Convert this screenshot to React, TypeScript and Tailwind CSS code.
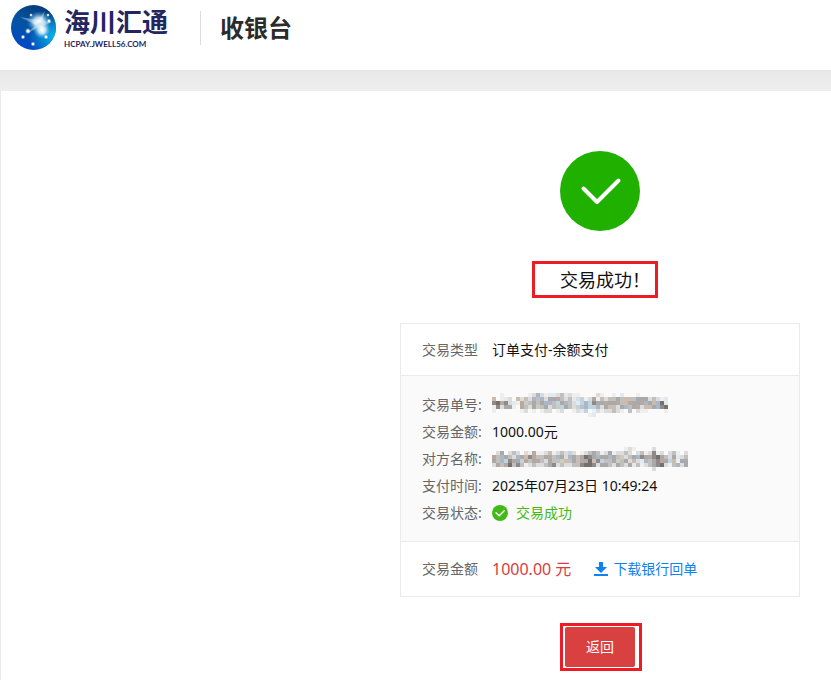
import type { ReactNode } from "react";

const MASK_COLOURS: Record<string, string> = {
  a: "#f0eeec",
  b: "#dcdcdc",
  c: "#c3bfbc",
  d: "#aaa9aa",
  e: "#8f8a87",
  f: "#a9b8c8",
  g: "#cdbcae",
  h: "#76706d",
  i: "#dfeaf2",
  j: "#bfd3e2",
  k: "#b8a89f",
  l: "#c9cdc2",
};

const ORDER_MASK = [
  "..a......abfbaiibcibaa....ba..a.i...a.......",
  "g.aib.gbcbfcfbddkcbcibjabdacbccdcgccdddbcbai",
  "ehkebiaklcdcdffcjdfcbijfjeddkddkcgkddkfdgfhi",
  "aebdda.kcbdlcdbcljdcbjcfjjfbdgcbdfcdkbggdfeh",
  "a......ab.a.abb.ab..abij.ababbcba.c.baa....a",
  "........................ai..................",
];

const PAYEE_MASK = [
  ".................................aba....b........",
  ".bd.bcb.bakaabcabcbjb.abcdcabdabbcb.bcabeab.bca.b",
  "kgfdcbfkgekccdkcfdbfdgdhedfddfdclbcdfedkehdcbdibc",
  "dcfjeddjkcdkcbdcclgcdckdhgejccdlcdbgbifcdekdjgadd",
  "bdckhcecabcbbcdebcbbccehhebddcbdcbdicabcdehbacfbd",
  "........................................b........",
];

function MaskedValue({ rows, label }: { rows: string[]; label: string }) {
  const width = Math.max(...rows.map((r) => r.length)) * 4;
  return (
    <svg
      role="img"
      aria-label={label}
      width={width}
      height={rows.length * 4}
      shapeRendering="crispEdges"
    >
      {rows.flatMap((row, y) =>
        row.split("").map((cell, x) =>
          MASK_COLOURS[cell] ? (
            <rect key={`${x}-${y}`} x={x * 4} y={y * 4} width="4" height="4" fill={MASK_COLOURS[cell]} />
          ) : null,
        ),
      )}
    </svg>
  );
}

function Globe() {
  const stars = [
    [20, 10, 1.5],
    [37, 10, 1.5],
    [38, 16, 2],
    [17, 26, 2.5],
    [12, 32, 2],
    [22, 39, 2],
    [35, 32, 2],
  ];
  return (
    <svg className="size-[45px] shrink-0" viewBox="0 0 45 45" aria-hidden="true">
      <defs>
        <linearGradient id="sea" x1="0.7" y1="0" x2="0.3" y2="1">
          <stop offset="0" stopColor="#053a78" />
          <stop offset="0.45" stopColor="#0454a0" />
          <stop offset="1" stopColor="#0348c8" />
        </linearGradient>
        <radialGradient id="rim" cx="0.95" cy="0.7" r="0.55">
          <stop offset="0" stopColor="#08b4ee" />
          <stop offset="1" stopColor="#08b4ee" stopOpacity="0" />
        </radialGradient>
        <radialGradient id="glow">
          <stop offset="0" stopColor="#fff" />
          <stop offset="0.4" stopColor="#dff1fa" stopOpacity="0.85" />
          <stop offset="1" stopColor="#3aa5e0" stopOpacity="0" />
        </radialGradient>
      </defs>
      <circle cx="22.500" cy="22.500" r="22.500" fill="url(#sea)" />
      <circle cx="22.500" cy="22.500" r="22.500" fill="url(#rim)" />
      <ellipse cx="28" cy="17" rx="12" ry="11" fill="url(#glow)" />
      <circle cx="31" cy="25" r="9" fill="url(#glow)" />
      <path
        d="M9 12l18 3l7-9l-3 10l10 1l-9 4l1 9l-5-8l-13 7l10-9z"
        fill="#fff"
        opacity="0.35"
      />
      {stars.map(([x, y, r]) => (
        <g key={`${x}-${y}`} fill="#dff4ff">
          <circle cx={x} cy={y} r={r} opacity="0.45" />
          <circle cx={x} cy={y} r={r * 0.6} fill="#fff" />
        </g>
      ))}
    </svg>
  );
}

function Detail({ label, children }: { label: string; children: ReactNode }) {
  return (
    <div className="flex h-[27px] items-center">
      <dt className="w-[70px] shrink-0 text-[#666]">{label}</dt>
      <dd className="flex items-center">{children}</dd>
    </div>
  );
}

export default function App() {
  return (
    <div className="flex min-h-screen flex-col bg-white font-['Noto_Sans','Noto_Sans_CJK_SC',sans-serif] text-sm text-[#111]">
      <header className="flex h-[70px] items-start pl-[11px]">
        <div className="flex items-center gap-2 pt-[5px] text-[#23265f]">
          <Globe />
          <div className="flex w-[110px] flex-col">
            <span className="text-[26px] leading-8 font-bold">海川汇通</span>
            <span className="font-['Lato',sans-serif] text-[8px] leading-3 font-bold">
              HCPAY.JWELL56.COM
            </span>
          </div>
        </div>
        <div className="mt-[11px] ml-[26px] flex h-[34px] items-center border-l border-[#ddd] pl-[19px]">
          <h1 className="text-2xl font-bold text-[#2b2b2b]">收银台</h1>
        </div>
      </header>
      <div className="h-[21px] bg-linear-to-b from-[#e8e8e8] to-[#eee]" />

      <main className="flex grow justify-end border-l border-[#e8e8e8] pt-[60px] pr-[31px]">
        <div className="flex w-full max-w-[400px] flex-col items-center">
          <svg className="size-20" viewBox="0 0 80 80" aria-hidden="true">
            <circle cx="40" cy="40" r="40" fill="#1fb000" />
            <path
              d="M23.500 37.500L37 51L58.500 29.500"
              fill="none"
              stroke="#fff"
              strokeWidth="4"
              strokeLinecap="round"
              strokeLinejoin="round"
            />
          </svg>

          <div className="relative mt-[30px] flex h-[37px] w-20 items-center">
            <h2 className="text-lg whitespace-nowrap">交易成功！</h2>
            <span className="pointer-events-none absolute inset-y-0 -left-7 w-[126px] border-3 border-[#ed1c24]" />
          </div>

          <section className="mt-[25px] w-full border border-[#ebebeb]">
            <dl>
              <div className="flex h-[52px] items-center border-b border-[#ebebeb] px-[21px]">
                <dt className="w-[70px] text-[#666]">交易类型</dt>
                <dd>订单支付-余额支付</dd>
              </div>
              <div className="border-b border-[#ebebeb] bg-[#fafafa] px-[21px] py-[15px]">
                <Detail label="交易单号:">
                  <MaskedValue rows={ORDER_MASK} label="已隐藏的交易单号" />
                </Detail>
                <Detail label="交易金额:">1000.00元</Detail>
                <Detail label="对方名称:">
                  <MaskedValue rows={PAYEE_MASK} label="已隐藏的对方名称" />
                </Detail>
                <Detail label="支付时间:">2025年07月23日 10:49:24</Detail>
                <Detail label="交易状态:">
                  <svg className="mr-2 size-4" viewBox="0 0 16 16" aria-hidden="true">
                    <circle cx="8" cy="8" r="8" fill="#43b917" />
                    <path
                      d="M4 7.800L7.200 10.800L12.200 5.800"
                      fill="none"
                      stroke="#fff"
                      strokeWidth="1.400"
                      strokeLinecap="round"
                    />
                  </svg>
                  <span className="text-[#43b917]">交易成功</span>
                </Detail>
              </div>
              <div className="flex h-[54px] items-center px-[21px]">
                <dt className="w-[70px] text-[#666]">交易金额</dt>
                <dd className="flex items-center gap-[22px]">
                  <span className="text-base text-[#d93d3d]">1000.00 元</span>
                  <a href="#receipt" className="flex items-center gap-1 text-[#0f82f0]">
                    <svg className="size-4" viewBox="0 0 16 16" fill="currentColor" aria-hidden="true">
                      <path d="M6 1h4v5H14L8 12L2 6h4zM1 13h14v2H1z" />
                    </svg>
                    下载银行回单
                  </a>
                </dd>
              </div>
            </dl>
          </section>

          <div className="relative mt-[30px]">
            <button type="button" className="h-10 w-[70px] rounded-xs bg-[#d94040] text-sm text-white">
              返回
            </button>
            <span className="pointer-events-none absolute -top-1 -left-[5px] h-12 w-[82px] border-3 border-[#ed1c24]" />
          </div>
        </div>
      </main>
    </div>
  );
}
